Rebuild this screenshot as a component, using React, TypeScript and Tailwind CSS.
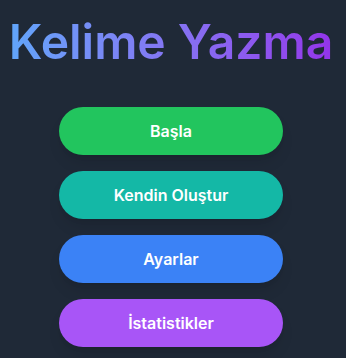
const buttons = [
  { label: "Başla", color: "bg-[#22c55e] hover:bg-[#16a34a]" },
  { label: "Kendin Oluştur", color: "bg-[#14b8a6] hover:bg-[#0d9488]" },
  { label: "Ayarlar", color: "bg-[#3b82f6] hover:bg-[#2563eb]" },
  { label: "İstatistikler", color: "bg-[#a855f7] hover:bg-[#9333ea]" },
];

const App: React.FC = () => {
  return (
    <div
      className="min-h-screen bg-[#1f2937] flex flex-col items-center pt-[18px] pr-1"
      style={{ fontFamily: "Inter, 'Noto Sans', sans-serif" }}
    >
      <h1 className="text-5xl leading-none font-semibold bg-gradient-to-r from-[#60a5fa] to-[#9333ea] bg-clip-text text-transparent mb-[41px]">
        Kelime Yazma
      </h1>
      <div className="flex flex-col gap-4">
        {buttons.map((b) => (
          <button
            key={b.label}
            className={`w-56 h-12 rounded-full text-white text-base font-semibold shadow-lg ${b.color}`}
          >
            {b.label}
          </button>
        ))}
      </div>
    </div>
  );
};

export default App;
